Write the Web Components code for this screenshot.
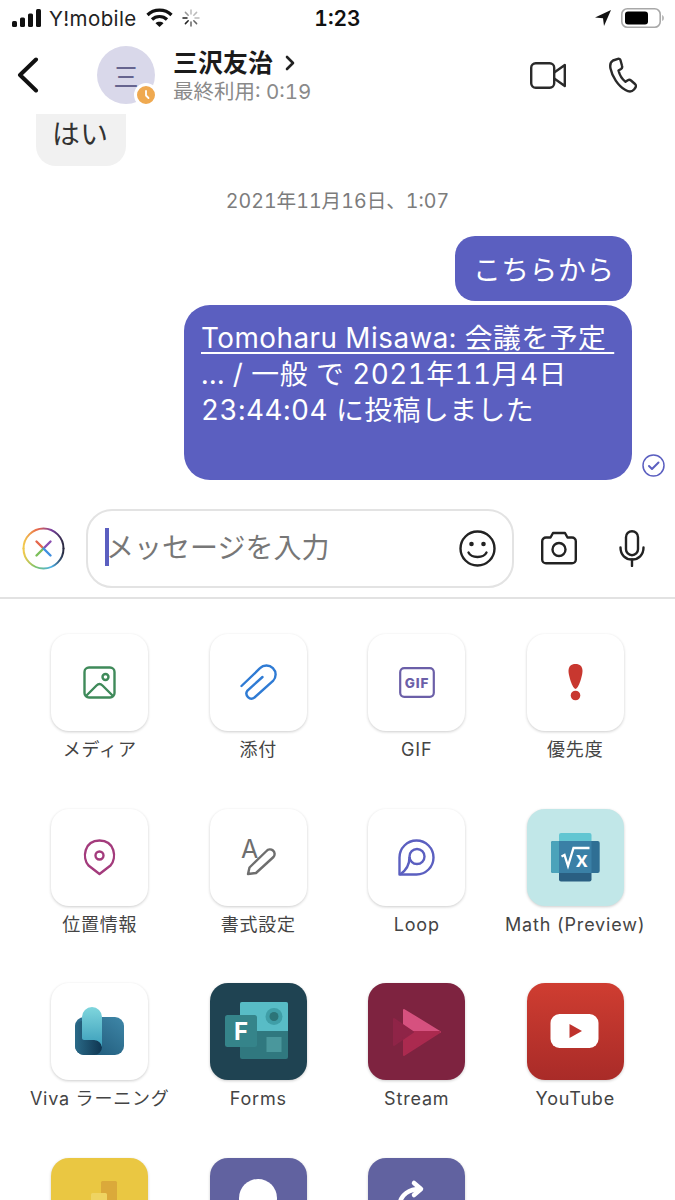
<!DOCTYPE html>
<html lang="ja">
<head>
<meta charset="utf-8">
<title>Chat</title>
<style>
  html, body { margin: 0; padding: 0; background: #fff; height: 1200px; overflow: hidden; }
  body { font-family: Inter, "Noto Sans CJK JP", sans-serif; color: #222; font-variant-numeric: tabular-nums; }
  u { text-underline-offset: 4px; text-decoration-thickness: 1.5px; }
</style>
</head>
<body>
<teams-chat>
  <status-bar slot="status"></status-bar>
  <chat-header slot="header" name="三沢友治" seen="最終利用: 0:19"></chat-header>

  <chat-bubble slot="messages" cut style="margin-left:36px;width:90px;height:52px;padding:0 0 0 16px">はい</chat-bubble>
  <chat-date slot="messages">2021年11月16日、1:07</chat-date>
  <chat-bubble slot="messages" mine style="margin-left:455px;width:177px;height:65px;padding:0 0 2px 18px">こちらから</chat-bubble>
  <chat-bubble slot="messages" mine sent style="margin:4px 0 0 184px;width:448px;height:175px;padding:15px 0 0 17px"><u>Tomoharu Misawa: 会議を予定&nbsp;</u><br>... / 一般 で 2021年11月4日<br>23:44:04 に投稿しました</chat-bubble>

  <chat-composer slot="composer" placeholder="メッセージを入力"></chat-composer>

  <app-tile slot="apps" label="メディア">
    <svg width="33" height="33" viewBox="0 0 33 33" fill="none" stroke="#3f8a5a" stroke-width="2.4" stroke-linejoin="round"><rect x="1.5" y="1.5" width="30" height="30" rx="4.5"/><circle cx="22.5" cy="11" r="3"/><path d="M3 30 13.5 19.5Q16.5 16.5 19.5 19.5L30 30"/></svg>
  </app-tile>
  <app-tile slot="apps" label="添付">
    <svg width="37" height="37" viewBox="0 0 37 37" fill="none" stroke="#2f7bd4" stroke-width="2.4" stroke-linecap="round"><path d="M1.5 22 20 4.2A9 9 0 0 1 33 17L14.5 33.5A5 5 0 0 1 7.5 26.5L22.5 13"/></svg>
  </app-tile>
  <app-tile slot="apps" label="GIF">
    <svg width="36" height="31" viewBox="0 0 36 31"><rect x="1.2" y="1.2" width="33.6" height="28.6" rx="4" fill="none" stroke="#6b5fa8" stroke-width="2.2"/><text x="18" y="21" text-anchor="middle" font-family="Inter, sans-serif" font-weight="800" font-size="13.5" letter-spacing=".8" fill="#6b5fa8">GIF</text></svg>
  </app-tile>
  <app-tile slot="apps" label="優先度">
    <svg width="15" height="37" viewBox="0 0 15 37" fill="#c8372f"><path d="M7.5 0C12 0 14.5 2.5 14.5 7 14.5 12 10.5 24.5 7.5 25 4.5 24.5.5 12 .5 7 .5 2.5 3 0 7.5 0Z"/><circle cx="7.5" cy="31.5" r="4.8"/></svg>
  </app-tile>

  <app-tile slot="apps" label="位置情報">
    <svg width="33" height="37" viewBox="0 0 33 37" fill="none" stroke="#a33b7c" stroke-width="2.4" stroke-linejoin="round"><path d="M16.5 35 5.5 26.5C-1 19 1 1.5 16.5 1.5S34 19 27.5 26.5Z"/><circle cx="16.5" cy="16.5" r="4"/></svg>
  </app-tile>
  <app-tile slot="apps" label="書式設定">
    <svg width="97" height="97" viewBox="0 0 97 97" fill="none" stroke="#6e6e6e" stroke-width="2.4" stroke-linejoin="round"><text x="31" y="49" font-family="Inter, sans-serif" font-size="25" font-weight="400" fill="#6e6e6e" stroke="none">A</text><path d="M38 65 39.5 58.5 56.5 42A4.5 4.5 0 0 1 63.5 48L46 64Z"/></svg>
  </app-tile>
  <app-tile slot="apps" label="Loop">
    <svg width="37" height="37" viewBox="0 0 37 37" fill="none" stroke="#5b5fc0" stroke-width="2.4"><path d="M1.5 35.5V18.5A17 17 0 1 1 18.5 35.5Z" stroke-linejoin="round"/><circle cx="19" cy="17.5" r="7.5"/><path d="M11.5 18C11.5 26 9 31 2 35.5"/></svg>
  </app-tile>
  <app-tile slot="apps" label="Math (Preview)" bg="#c1e7e8">
    <svg width="97" height="97" viewBox="0 0 97 97"><rect x="32" y="24" width="32.5" height="30" rx="2" fill="#62c6d2"/><rect x="32" y="60" width="32.5" height="12.5" rx="2" fill="#2a5f82"/><rect x="24" y="32" width="48.7" height="32" rx="2" fill="#2f6f94"/><rect x="24" y="32" width="10" height="32" rx="2" fill="#4ba3ba"/><rect x="32" y="32" width="32.5" height="32" fill="#3a80a6"/><polyline points="34.5,47.5 37.5,46 41,57 46.5,39 62.5,39" fill="none" stroke="#fff" stroke-width="2.3"/><text x="48.5" y="57.5" font-family="Inter, sans-serif" font-weight="600" font-size="22" fill="#fff">x</text></svg>
  </app-tile>

  <app-tile slot="apps" label="Viva ラーニング">
    <svg width="97" height="97" viewBox="0 0 97 97"><defs><linearGradient id="v1" x1="0" y1="1" x2="1" y2="0"><stop offset="0" stop-color="#1a5272"/><stop offset="1" stop-color="#3f87a8"/></linearGradient><linearGradient id="v2" x1="0" y1="0" x2="0" y2="1"><stop offset="0" stop-color="#7fd6dd"/><stop offset="1" stop-color="#3a9dba"/></linearGradient><linearGradient id="v3" x1="0" y1="0" x2="1" y2="0"><stop offset="0" stop-color="#2a6a88"/><stop offset="1" stop-color="#0f3550"/></linearGradient></defs><rect x="24" y="34" width="49" height="38" rx="9" fill="url(#v1)"/><path d="M24 45V63A9 9 0 0 0 33 72H43A8 8 0 0 0 51 64 8 8 0 0 0 43 57H33C32 57 31 56 31 55V38A7 7 0 0 0 24 45Z" fill="url(#v3)"/><path d="M31 34A10 10 0 0 1 51 34V64A8 8 0 0 0 43 57H33C32 57 31 56 31 55Z" fill="url(#v2)"/></svg>
  </app-tile>
  <app-tile slot="apps" label="Forms" bg="#1f4352">
    <svg width="97" height="97" viewBox="0 0 97 97"><rect x="30" y="19" width="48" height="57" rx="2" fill="#30787f"/><path d="M32 19H76A2 2 0 0 1 78 21V48H30V21A2 2 0 0 1 32 19Z" fill="#58bcc6"/><circle cx="64" cy="33.5" r="8.5" fill="#3f9ea7"/><circle cx="64" cy="33.5" r="4.5" fill="#2c7478"/><rect x="56.5" y="54" width="15" height="15" fill="#4a979c"/><rect x="15" y="32" width="32" height="32" rx="2.5" fill="#35848a"/><text x="31" y="57" text-anchor="middle" font-family="Inter, sans-serif" font-weight="700" font-size="24" fill="#fff">F</text></svg>
  </app-tile>
  <app-tile slot="apps" label="Stream" bg="#7e2340">
    <svg width="97" height="97" viewBox="0 0 97 97"><path d="M36 27 72 49H36Z" fill="#d6517f" stroke="#d6517f" stroke-width="2" stroke-linejoin="round"/><path d="M36 49H72L36 72Z" fill="#ab2a4f" stroke="#ab2a4f" stroke-width="2" stroke-linejoin="round"/><path d="M26 36 45 49 26 62Z" fill="#8f2447" stroke="#8f2447" stroke-width="2" stroke-linejoin="round"/></svg>
  </app-tile>
  <app-tile slot="apps" label="YouTube" gradient="#cf3d31,#a92b28">
    <svg width="97" height="97" viewBox="0 0 97 97"><rect x="23.5" y="31" width="48" height="34" rx="9" fill="#fff"/><path d="M42.5 41 55 48 42.5 55Z" fill="#bf322c"/></svg>
  </app-tile>

  <app-tile slot="apps" bg="#eac742">
    <svg width="97" height="97" viewBox="0 0 97 97"><rect x="50" y="23" width="16" height="60" rx="1.5" fill="#dba93a"/><rect x="40" y="35" width="16" height="50" rx="1.5" fill="#efd462"/></svg>
  </app-tile>
  <app-tile slot="apps" bg="#6162a0">
    <svg width="97" height="97" viewBox="0 0 97 97"><circle cx="48" cy="40" r="19" fill="#fff"/></svg>
  </app-tile>
  <app-tile slot="apps" bg="#6162a0">
    <svg width="97" height="97" viewBox="0 0 97 97" fill="none" stroke="#fff" stroke-width="4.5" stroke-linecap="round" stroke-linejoin="round"><path d="M32 45C33 37 41 31 52 31"/><path d="M46 25 53 31 46 37"/></svg>
  </app-tile>
</teams-chat>

<script>
class TeamsChat extends HTMLElement {
	constructor() {
		super();
		this.attachShadow({ mode: 'open' });
		this.shadowRoot.innerHTML = `
    <style>
      :host { display: block; width: 675px; height: 1200px; overflow: hidden; }
      .messages { display: flex; flex-direction: column; height: 366px; }
      .divider { height: 2px; background: #e2e2e2; }
      .apps {
        display: grid;
        grid-template-columns: repeat(4, 158.5px);
        grid-auto-rows: 174.5px;
        padding: 35px 0 0 20.5px;
      }
    </style>
    <slot name="status"></slot>
    <slot name="header"></slot>
    <div class="messages"><slot name="messages"></slot></div>
    <slot name="composer"></slot>
    <div class="divider"></div>
    <div class="apps"><slot name="apps"></slot></div>
    `;
	}
}

class StatusBar extends HTMLElement {
	constructor() {
		super();
		this.attachShadow({ mode: 'open' });
		this.shadowRoot.innerHTML = `
    <style>
      :host {
        display: grid;
        grid-template-columns: 1fr auto 1fr;
        align-items: center;
        height: 36px;
        padding: 0 11px 0 12px;
        color: #111;
      }
      .left, .right { display: flex; align-items: center; }
      .right { justify-content: flex-end; }
      .carrier { font-size: 20.5px; letter-spacing: .4px; margin: 0 9px 0 8px; color: #222; }
      .time { font-size: 21px; font-weight: 600; margin-left: -1px; }
      svg { display: block; }
    </style>
    <div class="left">
      <svg width="29" height="18" viewBox="0 0 29 18" fill="#111"><rect x="0" y="12" width="5" height="6" rx="1.5"/><rect x="8" y="8.5" width="5" height="9.5" rx="1.5"/><rect x="16" y="4.5" width="5" height="13.5" rx="1.5"/><rect x="24" y="0" width="5" height="18" rx="1.5"/></svg>
      <span class="carrier">Y!mobile</span>
      <svg width="27" height="20" viewBox="0 0 27 20" fill="none" stroke="#111" stroke-width="3.2"><path d="M1.5 7C8 .5 19 .5 25.5 7"/><path d="M6 11.5C10 7.5 17 7.5 21 11.5"/><path d="M13.5 19 9.5 15.2C11.5 13.3 15.5 13.3 17.5 15.2Z" fill="#111" stroke="none"/></svg>
      <svg style="margin-left:9px" width="18" height="18" viewBox="0 0 18 18" stroke-width="1.5" stroke-linecap="round"><g stroke="#bbb"><path d="M9 1V5"/><path d="M14.6 3.4 11.8 6.2"/><path d="M17 9H13"/></g><g stroke="#666"><path d="M14.6 14.6 11.8 11.8"/><path d="M9 17V13"/></g><g stroke="#222"><path d="M3.4 14.6 6.2 11.8"/><path d="M1 9H5"/></g><path stroke="#999" d="M3.4 3.4 6.2 6.2"/></svg>
    </div>
    <div class="time">1:23</div>
    <div class="right">
      <svg width="16" height="16" viewBox="0 0 16 16" fill="#111"><path d="M16 0 0 7.5 8 8.2 9 16Z"/></svg>
      <svg style="margin-left:10px" width="43" height="20" viewBox="0 0 43 20"><rect x=".8" y=".8" width="38.4" height="18.4" rx="5.5" fill="none" stroke="#a8a8a8" stroke-width="1.6"/><rect x="4" y="3.5" width="23" height="13" rx="3" fill="#000"/><path d="M41 7C42.3 7.5 43 8.5 43 10S42.3 12.500 41 13Z" fill="#bbb"/></svg>
    </div>
    `;
	}
}

class ChatHeader extends HTMLElement {
	constructor() {
		super();
		this.attachShadow({ mode: 'open' });
		this.shadowRoot.innerHTML = `
    <style>
      :host {
        display: flex;
        align-items: center;
        height: 78px;
        padding: 0 38px 0 17px;
      }
      .back { margin-right: 58px; display: block; }
      .avatar {
        position: relative;
        flex: none;
        width: 58px;
        height: 58px;
        border-radius: 50%;
        background: #d9d8ea;
        color: #66648f;
        font-size: 25px;
        display: flex;
        align-items: center;
        justify-content: center;
      }
      .badge {
        position: absolute;
        right: -3px;
        bottom: -3px;
        width: 18px;
        height: 18px;
        border-radius: 50%;
        background: #efa950;
        border: 3px solid #fff;
      }
      .badge svg { display: block; }
      .info { margin-left: 18px; flex: 1; padding-top: 2px; }
      .name { font-size: 25px; font-weight: 700; line-height: 32px; color: #1b1b1b; display: flex; align-items: center; gap: 12px; }
      .seen { font-size: 20.5px; line-height: 26px; color: #8a8a8a; }
      .call { display: flex; align-items: center; gap: 43px; }
      svg { display: block; }
    </style>
    <svg class="back" width="22" height="36" viewBox="0 0 22 36" fill="none" stroke="#111" stroke-width="4" stroke-linecap="round" stroke-linejoin="round"><path d="M19 2.5 3 18 19 33.5"/></svg>
    <div class="avatar">三
      <span class="badge"><svg width="18" height="18" viewBox="0 0 18 18" fill="none" stroke="#fff" stroke-width="1.8" stroke-linecap="round" stroke-linejoin="round"><path d="M9 5V9.5L11.5 12"/></svg></span>
    </div>
    <div class="info">
      <div class="name"><span id="name"></span><svg width="10" height="16" viewBox="0 0 10 16" fill="none" stroke="#222" stroke-width="2.6" stroke-linecap="round" stroke-linejoin="round"><path d="M2 2 8 8 2 14"/></svg></div>
      <div class="seen" id="seen"></div>
    </div>
    <div class="call">
      <svg width="36" height="27" viewBox="0 0 36 27" fill="none" stroke="#2a2a2a" stroke-width="2.4" stroke-linejoin="round"><rect x="1.2" y="1.2" width="23" height="24.6" rx="4.5"/><path d="M24.2 10.5 34.8 3V24L24.2 16.5"/></svg>
      <svg width="28" height="36" viewBox="0 0 28 36" fill="none" stroke="#2a2a2a" stroke-width="2.4" stroke-linejoin="round"><path d="M9 1.8 4 3.5C1.5 5 .8 8 1.5 11.5 3 19 9 29 16.5 33 19.5 34.8 23 34.8 25 32.5L26.500 30.5C27.2 29.3 27 28 26 27L22 23.5C21 22.7 19.8 22.7 18.8 23.3L16.5 24.8C13.5 22.5 10.5 17.5 9.5 13.5L12 12C13 11.3 13.4 10 13 8.8L11.5 3.3C11.2 2.2 10 1.5 9 1.8Z"/></svg>
    </div>
    `;
		this.shadowRoot.querySelector('#name').textContent = this.getAttribute('name');
		this.shadowRoot.querySelector('#seen').textContent = this.getAttribute('seen');
	}
}

class ChatBubble extends HTMLElement {
	constructor() {
		super();
		this.attachShadow({ mode: 'open' });
		this.shadowRoot.innerHTML = `
    <style>
      :host {
        position: relative;
        box-sizing: border-box;
        flex: none;
        display: flex;
        align-items: center;
        white-space: nowrap;
        background: #f1f1f1;
        color: #333;
        font-size: 27.8px;
        letter-spacing: .5px;
        border-radius: 20px;
      }
      :host([cut]) { border-radius: 0 0 20px 20px; align-items: flex-start; line-height: 40px; }
      :host([mine]) { background: #5b5fc0; color: #fff; }
      :host([sent]) { display: block; line-height: 36px; border-radius: 26px; }
      .check { position: absolute; display: none; right: -33px; bottom: 3px; }
      :host([sent]) .check { display: block; }
    </style>
    <div><slot></slot></div>
    <svg class="check" width="23" height="23" viewBox="0 0 23 23" fill="none" stroke="#5b5fc0"><circle cx="11.5" cy="11.5" r="10.5" stroke-width="1.5"/><path d="M7 12 10 15 16.5 8.5" stroke-width="2" stroke-linecap="round" stroke-linejoin="round"/></svg>
    `;
	}
}

class ChatDate extends HTMLElement {
	constructor() {
		super();
		this.attachShadow({ mode: 'open' });
		this.shadowRoot.innerHTML = `
    <style>
      :host {
        display: block;
        flex: none;
        height: 70px;
        line-height: 70px;
        text-align: center;
        font-size: 19.6px;
        color: #7c7c7c;
      }
    </style>
    <slot></slot>
    `;
	}
}

class ChatComposer extends HTMLElement {
	constructor() {
		super();
		this.attachShadow({ mode: 'open' });
		this.shadowRoot.innerHTML = `
    <style>
      :host {
        display: flex;
        align-items: center;
        height: 117px;
        box-sizing: border-box;
        padding: 19px 30px 0 21.5px;
      }
      .box {
        box-sizing: border-box;
        width: 428px;
        height: 79px;
        margin-left: 21.5px;
        border: 2px solid #e3e3e3;
        border-radius: 26px;
        display: flex;
        align-items: center;
        padding: 0 16px 0 17px;
      }
      .caret { width: 3.5px; height: 38px; margin-bottom: 3px; background: #5b5fc0; flex: none; }
      .hint { flex: 1; font-size: 28px; color: #777; margin-left: -2.5px; padding-bottom: 4px; white-space: nowrap; }
      .camera { margin-left: 27px; }
      .mic { margin-left: 42px; }
      svg { display: block; flex: none; }
    </style>
    <svg width="43" height="43" viewBox="0 0 43 43" fill="none" stroke-linecap="round">
      <defs>
        <linearGradient id="r1" x1="0" y1="0" x2="1" y2="0"><stop offset="0" stop-color="#f2c94c"/><stop offset=".35" stop-color="#e8674a"/><stop offset=".7" stop-color="#7a3fa0"/><stop offset="1" stop-color="#2a2a40"/></linearGradient>
        <linearGradient id="r2" x1="0" y1="0" x2="1" y2="0"><stop offset="0" stop-color="#f2c94c"/><stop offset=".3" stop-color="#7cc36a"/><stop offset=".7" stop-color="#4ab0e8"/><stop offset="1" stop-color="#2a2a40"/></linearGradient>
      </defs>
      <path d="M1.5 21.5A20 20 0 0 1 41.5 21.5" stroke="url(#r1)" stroke-width="2"/>
      <path d="M1.5 21.5A20 20 0 0 0 41.5 21.5" stroke="url(#r2)" stroke-width="2"/>
      <path d="M14.5 14.5 21.5 21.5" stroke="#e5674c" stroke-width="2.4"/>
      <path d="M28.5 14.5 21.5 21.5" stroke="#8a4fb0" stroke-width="2.4"/>
      <path d="M14.5 28.5 21.5 21.5" stroke="#7cbf5a" stroke-width="2.4"/>
      <path d="M28.5 28.5 21.5 21.5" stroke="#3f8fe0" stroke-width="2.4"/>
    </svg>
    <div class="box">
      <span class="caret"></span>
      <span class="hint" id="hint"></span>
      <svg width="37" height="37" viewBox="0 0 37 37" fill="none" stroke="#222" stroke-width="2.4" stroke-linecap="round"><circle cx="18.5" cy="18.5" r="17"/><circle cx="12.5" cy="14" r="2.3" fill="#222" stroke="none"/><circle cx="24.5" cy="14" r="2.3" fill="#222" stroke="none"/><path d="M9.5 22.5C12.5 28.5 24.5 28.5 27.5 22.5"/></svg>
    </div>
    <svg class="camera" width="36" height="34" viewBox="0 0 36 34" fill="none" stroke="#222" stroke-width="2.4" stroke-linejoin="round"><path d="M5 6.5H9.500L12 2H24L26.5 6.5H31A3.8 3.8 0 0 1 34.8 10.3V28.5A3.8 3.8 0 0 1 31 32.3H5A3.8 3.8 0 0 1 1.2 28.5V10.3A3.8 3.8 0 0 1 5 6.5Z"/><circle cx="18" cy="18.5" r="6.5"/></svg>
    <svg class="mic" width="26" height="37" viewBox="0 0 26 37" fill="none" stroke="#222" stroke-width="2.4" stroke-linecap="round"><rect x="7" y="1.2" width="12" height="24" rx="6"/><path d="M1.5 17.5C1.5 25 6.5 29.5 13 29.5S24.5 25 24.5 17.5"/><path d="M13 29.5V36"/></svg>
    `;
		this.shadowRoot.querySelector('#hint').textContent = this.getAttribute('placeholder');
	}
}

class AppTile extends HTMLElement {
	constructor() {
		super();
		this.attachShadow({ mode: 'open' });
		this.shadowRoot.innerHTML = `
    <style>
      :host {
        display: flex;
        flex-direction: column;
        align-items: center;
        min-width: 0;
      }
      .icon {
        box-sizing: border-box;
        width: 97px;
        height: 97px;
        flex: none;
        border-radius: 18px;
        background: #fff;
        box-shadow: 0 1px 3px rgba(0, 0, 0, 0.2);
        display: flex;
        align-items: center;
        justify-content: center;
        overflow: hidden;
      }
      .label {
        margin-top: 6px;
        font-size: 18px;
        letter-spacing: .8px;
        line-height: 26px;
        color: #444;
        white-space: nowrap;
      }
    </style>
    <div class="icon"><slot></slot></div>
    <div class="label" id="label"></div>
    `;
		const icon = this.shadowRoot.querySelector('.icon');
		if (this.hasAttribute('bg')) icon.style.background = this.getAttribute('bg');
		if (this.hasAttribute('gradient')) {
			const [top, bottom] = this.getAttribute('gradient').split(',');
			icon.style.background = `linear-gradient(${top}, ${bottom})`;
		}
		this.shadowRoot.querySelector('#label').textContent = this.getAttribute('label') || '';
	}
}

customElements.define('teams-chat', TeamsChat);
customElements.define('status-bar', StatusBar);
customElements.define('chat-header', ChatHeader);
customElements.define('chat-bubble', ChatBubble);
customElements.define('chat-date', ChatDate);
customElements.define('chat-composer', ChatComposer);
customElements.define('app-tile', AppTile);
</script>
</body>
</html>
